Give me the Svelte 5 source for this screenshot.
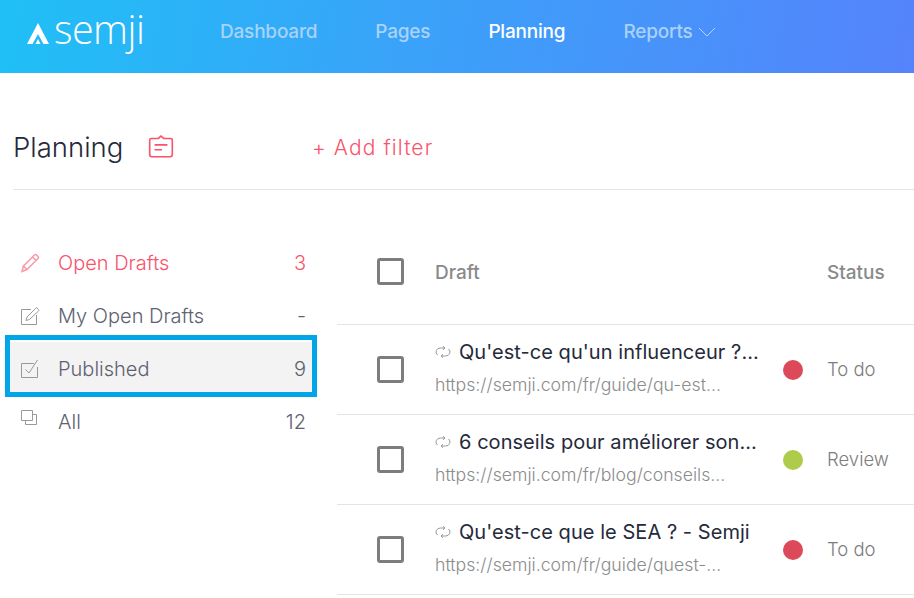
<script>
  const nav = [
    { label: 'Dashboard' },
    { label: 'Pages' },
    { label: 'Planning', active: true },
    { label: 'Reports', caret: true }
  ];
  const filters = [
    { label: 'Open Drafts', count: '3', icon: 'pencil', active: true },
    { label: 'My Open Drafts', count: '-', icon: 'edit' },
    { label: 'Published', count: '9', icon: 'check', selected: true },
    { label: 'All', count: '12', icon: 'copy' }
  ];
  const drafts = [
    { title: "Qu'est-ce qu'un influenceur ?...", url: 'https://semji.com/fr/guide/qu-est...', status: 'To do', color: '#dc4a5a' },
    { title: '6 conseils pour améliorer son...', url: 'https://semji.com/fr/blog/conseils...', status: 'Review', color: '#afcb4c' },
    { title: "Qu'est-ce que le SEA ? - Semji", url: 'https://semji.com/fr/guide/quest-...', status: 'To do', color: '#dc4a5a' }
  ];
</script>

<div class="page">
  <header class="topbar">
    <div class="logo">
      <svg width="22" height="21" viewBox="0 0 22 21">
        <path d="M11 0 L22 21 H16.500 L11 11 L5.500 21 H0 Z" fill="#fff" />
        <path d="M11 16 L13.500 21 H8.500 Z" fill="#fff" />
      </svg>
      <span>semji</span>
    </div>
    <nav>
      {#each nav as item}
        <span class="nav-item" class:active={item.active}>
          {item.label}
          {#if item.caret}
            <svg width="18" height="10" viewBox="0 0 18 10">
              <path d="M1 1 L9 9 L17 1" fill="none" stroke="#b5d2fb" stroke-width="1" />
            </svg>
          {/if}
        </span>
      {/each}
    </nav>
  </header>

  <div class="title-row">
    <h1>Planning</h1>
    <svg class="title-icon" width="28" height="26" viewBox="0 0 26 24" fill="none" stroke="#f9536b" stroke-width="1.500">
      <path d="M4 5 H10.500 L13 2.800 L15.500 5 H22 A1.500 1.500 0 0 1 23.500 6.500 V20 A2 2 0 0 1 21.500 22 H4.500 A2 2 0 0 1 2.500 20 V6.500 A1.500 1.500 0 0 1 4 5 Z" />
      <path d="M7 11 H19 M7 15.500 H14" />
    </svg>
    <span class="add-filter">+ Add filter</span>
  </div>

  <div class="content">
    <aside>
      {#each filters as f}
        <div class="filter" class:active={f.active} class:selected={f.selected}>
          <span class="filter-icon">
            {#if f.icon === 'pencil'}
              <svg width="20" height="20" viewBox="0 0 20 20" fill="none" stroke="#fa9aa6" stroke-width="1.500">
                <path d="M2 18.500 L3.500 13 L14.500 2 A1.500 1.500 0 0 1 16.500 2 L18 3.500 A1.500 1.500 0 0 1 18 5.500 L7 16.500 Z M3.500 13 L7 16.500 M12.500 4 L16 7.500" />
              </svg>
            {:else if f.icon === 'edit'}
              <svg width="20" height="20" viewBox="0 0 20 20" fill="none" stroke="#999" stroke-width="1">
                <path d="M11 3.500 H1.500 V18.500 H16.500 V9" />
                <path d="M6 14.500 L7 11 L15.500 2.500 A1 1 0 0 1 17 2 L18.500 3.500 A1 1 0 0 1 18.500 5 L9.500 13.500 Z" />
              </svg>
            {:else if f.icon === 'check'}
              <svg width="20" height="20" viewBox="0 0 20 20" fill="none" stroke="#999" stroke-width="1">
                <path d="M14 4.500 H1.500 V18.500 H17.500 V8" />
                <path d="M5.500 10.500 L9 14 L17.500 1" />
              </svg>
            {:else}
              <svg class="copy-icon" width="20" height="20" viewBox="0 0 20 20" fill="none" stroke="#999" stroke-width="1">
                <path d="M1.500 1.500 H12.500 V11.500 H1.500 Z" />
                <path d="M12.500 5.500 H16.500 V15.500 H5.500 V11.500" />
              </svg>
            {/if}
          </span>
          <span class="filter-label">{f.label}</span>
          <span class="filter-count">{f.count}</span>
        </div>
      {/each}
    </aside>

    <section class="table">
      <div class="row head">
        <span class="box"></span>
        <span class="col-draft">Draft</span>
        <span class="col-status">Status</span>
      </div>
      {#each drafts as d}
        <div class="row">
          <span class="box"></span>
          <div class="draft">
            <div class="draft-title">
              <svg width="16" height="12" viewBox="0 0 16 12" fill="none" stroke="#999" stroke-width="1">
                <path d="M2.500 9 A4.500 4 0 0 1 5.500 2 H10 M8 0.200 L10 2 L8 3.800" />
                <path d="M13.500 3 A4.500 4 0 0 1 10.500 10 H6 M8 8.200 L6 10 L8 11.800" />
              </svg>
              <span>{d.title}</span>
            </div>
            <div class="draft-url">{d.url}</div>
          </div>
          <span class="dot" style="background: {d.color}"></span>
          <span class="status">{d.status}</span>
        </div>
      {/each}
    </section>
  </div>
</div>

<style>
  :global(body) {
    margin: 0;
    overflow: hidden;
    background: #fff;
  }
  .page {
    width: 914px;
    height: 598px;
    overflow: hidden;
    font-family: Inter, "Liberation Sans", sans-serif;
  }
  .topbar {
    height: 73px;
    padding-bottom: 10px;
    box-sizing: border-box;
    display: flex;
    align-items: center;
    background: linear-gradient(100deg, #1fc0f6 0%, #3aa2f9 45%, #5583fb 100%);
  }
  .logo {
    display: flex;
    align-items: center;
    gap: 5px;
    margin-left: 27px;
    width: 193px;
    color: #fff;
    font-family: "Open Sans", sans-serif;
    font-weight: 300;
    font-size: 39.5px;
    letter-spacing: -0.5px;
  }
  .logo svg {
    margin-top: 3px;
  }
  .logo span {
    line-height: 40px;
    margin-top: -6px;
  }
  nav {
    display: flex;
    gap: 58px;
  }
  .nav-item {
    display: flex;
    align-items: center;
    gap: 5px;
    font-size: 19px;
    font-weight: 500;
    color: #a9d2fb;
    letter-spacing: -0.2px;
  }
  .nav-item.active {
    color: #fff;
  }
  .title-row {
    height: 117px;
    padding-top: 32px;
    box-sizing: border-box;
    margin-left: 13px;
    display: flex;
    align-items: center;
    border-bottom: 1px solid #e4e4e4;
  }
  h1 {
    margin: 0;
    font-size: 27.5px;
    font-weight: 300;
    color: #252a3a;
    width: 134px;
  }
  .title-icon {
    margin-top: -3px;
  }
  .add-filter {
    margin-left: 137px;
    color: #f9536b;
    font-size: 21px;
    font-weight: 300;
    letter-spacing: 1.1px;
    margin-top: 1px;
  }
  .content {
    display: flex;
    margin-top: 46px;
  }
  aside {
    width: 337px;
    flex-shrink: 0;
    padding: 0 0 0 10px;
    box-sizing: border-box;
  }
  .filter {
    position: relative;
    width: 302px;
    height: 53px;
    display: flex;
    align-items: center;
    padding: 0 6px 0 10px;
    box-sizing: border-box;
    color: #5d6170;
    font-size: 20px;
    font-weight: 300;
  }
  .filter.active {
    color: #f9536b;
  }
  .filter.selected {
    background: #f3f3f3;
  }
  .filter.selected::after {
    content: '';
    position: absolute;
    left: -5px;
    top: -7px;
    right: -5px;
    bottom: -2px;
    border: 5px solid #00a6e8;
  }
  .filter-icon {
    width: 38px;
    display: flex;
  }
  .copy-icon {
    margin-top: -6px;
  }
  .filter-label {
    flex: 1;
  }
  .table {
    flex: 1;
  }
  .row {
    height: 89px;
    display: flex;
    align-items: center;
    border-bottom: 1px solid #e4e4e4;
    padding-left: 40px;
  }
  .row.head {
    height: 104px;
    padding-top: 10px;
    margin-top: -26px;
  }
  .box {
    width: 21px;
    height: 21px;
    border: 3px solid #7d7d7d;
    border-radius: 3px;
    flex-shrink: 0;
    margin-top: -1px;
  }
  .col-draft {
    margin-left: 31px;
    width: 392px;
    color: #8a8a8a;
    font-size: 19px;
    font-weight: 500;
  }
  .col-status {
    color: #8a8a8a;
    font-size: 19px;
    font-weight: 500;
  }
  .draft {
    margin-left: 31px;
    width: 348px;
    margin-bottom: 4px;
  }
  .draft-title {
    display: flex;
    align-items: center;
    gap: 8px;
    color: #252a3a;
    font-size: 20px;
    letter-spacing: 0.05px;
    font-weight: 400;
    white-space: nowrap;
  }
  .draft-url {
    margin-top: 10px;
    color: #8c8c8c;
    font-size: 17.7px;
    font-weight: 300;
    white-space: nowrap;
  }
  .dot {
    width: 20px;
    height: 20px;
    border-radius: 50%;
    flex-shrink: 0;
  }
  .status {
    margin-left: 24px;
    margin-bottom: 1px;
    color: #7d7d7d;
    font-size: 18.5px;
    font-weight: 300;
  }
</style>
